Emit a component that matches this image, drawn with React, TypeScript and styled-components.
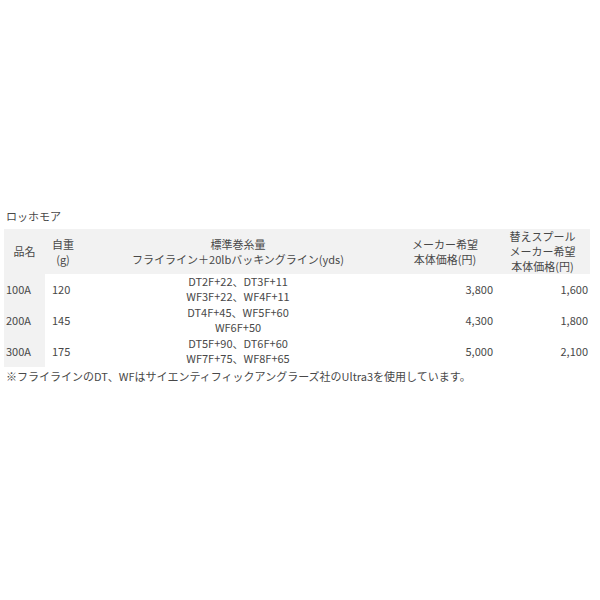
import * as React from "react";
import styled, { createGlobalStyle } from "styled-components";

interface IRow {
  name: string;
  weight: string;
  lines: string[];
  price: string;
  spool: string;
}

const rows: IRow[] = [
  {
    name: "100A",
    weight: "120",
    lines: ["DT2F+22、DT3F+11", "WF3F+22、WF4F+11"],
    price: "3,800",
    spool: "1,600",
  },
  {
    name: "200A",
    weight: "145",
    lines: ["DT4F+45、WF5F+60", "WF6F+50"],
    price: "4,300",
    spool: "1,800",
  },
  {
    name: "300A",
    weight: "175",
    lines: ["DT5F+90、DT6F+60", "WF7F+75、WF8F+65"],
    price: "5,000",
    spool: "2,100",
  },
];

function App() {
  return (
    <>
      <GlobalStyle />
      <Page>
        <Title>ロッホモア</Title>
        <SpecTable>
          <colgroup>
            <col style={{ width: 41 }} />
            <col style={{ width: 36 }} />
            <col style={{ width: 314 }} />
            <col style={{ width: 100 }} />
            <col style={{ width: 95 }} />
          </colgroup>
          <thead>
            <tr>
              <HeadCell>品名</HeadCell>
              <HeadCell>
                自重
                <br />
                (g)
              </HeadCell>
              <HeadCell>
                標準巻糸量
                <br />
                フライライン＋20lbバッキングライン(yds)
              </HeadCell>
              <HeadCell>
                メーカー希望
                <br />
                本体価格(円)
              </HeadCell>
              <HeadCell>
                替えスプール
                <br />
                メーカー希望
                <br />
                本体価格(円)
              </HeadCell>
            </tr>
          </thead>
          <tbody>
            {rows.map((row) => (
              <tr key={row.name}>
                <NameCell>{row.name}</NameCell>
                <Cell align="left">{row.weight}</Cell>
                <Cell align="center">
                  {row.lines.map((line, i) => (
                    <div key={i}>{line}</div>
                  ))}
                </Cell>
                <Cell align="right">{row.price}</Cell>
                <Cell align="right">{row.spool}</Cell>
              </tr>
            ))}
          </tbody>
        </SpecTable>
        <Note>
          ※フライラインのDT、WFはサイエンティフィックアングラーズ社のUltra3を使用しています。
        </Note>
      </Page>
    </>
  );
}

export default App;

const GlobalStyle = createGlobalStyle`
  html, body {
    margin: 0;
    background: #ffffff;
  }
  body {
    font-family: "Noto Sans CJK JP", "Noto Sans", sans-serif;
    font-size: 11px;
    color: #484848;
  }
`;

const Page = styled.div`
  width: 600px;
  height: 600px;
  padding: 207px 0 0 4px;
  box-sizing: border-box;
`;

const Title = styled.div`
  padding-left: 2px;
  line-height: 18px;
  height: 22px;
`;

const SpecTable = styled.table`
  border-collapse: collapse;
  table-layout: fixed;
  width: 586px;
  line-height: 15px;
`;

const HeadCell = styled.th`
  background: #f2f2f2;
  font-weight: normal;
  text-align: center;
  vertical-align: middle;
  padding: 0 2px;
  height: 45px;
  white-space: nowrap;
`;

const Cell = styled.td<{ align: "left" | "center" | "right" }>`
  text-align: ${(p) => p.align};
  vertical-align: middle;
  padding: 0 ${(p) => (p.align === "right" ? "2px" : "0")} 1px
    ${(p) => (p.align === "left" ? "7px" : "0")};
  height: 30px;
  white-space: nowrap;
`;

const NameCell = styled.td`
  background: #f2f2f2;
  text-align: left;
  vertical-align: middle;
  padding: 0 0 1px 2px;
  height: 30px;
`;

const Note = styled.div`
  padding-left: 2px;
  padding-top: 2px;
  line-height: 15px;
  white-space: nowrap;
`;
